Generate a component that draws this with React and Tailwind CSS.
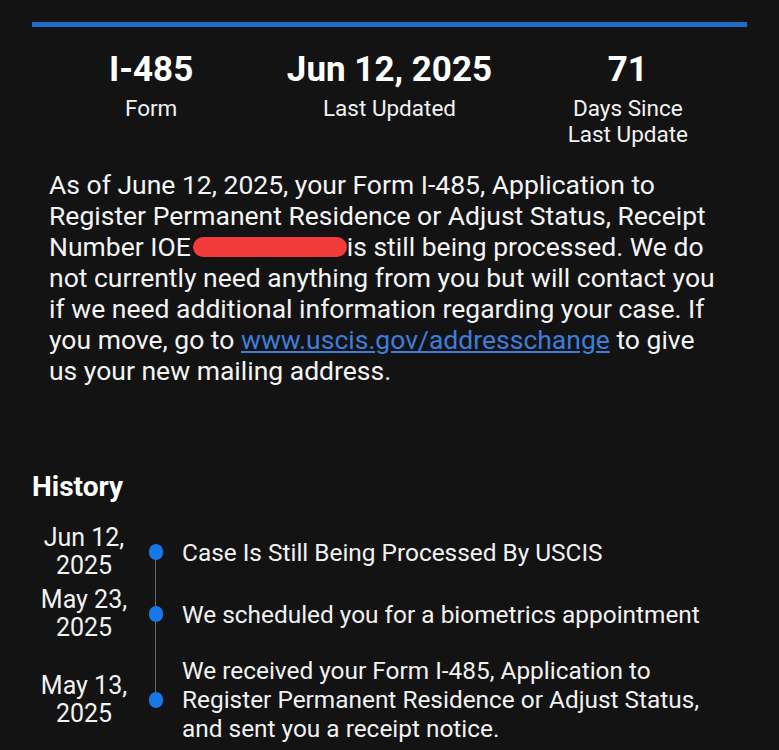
import React from "react";

const history = [
  { date: ["Jun 12,", "2025"], text: "Case Is Still Being Processed By USCIS", gap: "mb-[6px]" },
  { date: ["May 23,", "2025"], text: "We scheduled you for a biometrics appointment", gap: "mb-[14px]" },
  {
    date: ["May 13,", "2025"],
    text: "We received your Form I-485, Application to Register Permanent Residence or Adjust Status, and sent you a receipt notice.",
    gap: "",
  },
];

export default function App() {
  return (
    <div
      className="min-h-screen w-[779px] h-[750px] overflow-hidden bg-[#131313] text-white"
      style={{ fontFamily: "Roboto, 'Noto Sans', sans-serif" }}
    >
      <div className="px-8 pt-[22px]">
        <div className="h-[5px] bg-[#1f6cca]" />

        {/* stats */}
        <div className="grid grid-cols-3 mt-[23px] text-center">
          <div>
            <div className="text-[35px] font-bold leading-[40px]">I-485</div>
            <div className="text-[22.5px] leading-[26px] mt-[5px] text-[#f2f2f2]">Form</div>
          </div>
          <div>
            <div className="text-[35px] font-bold leading-[40px]">Jun 12, 2025</div>
            <div className="text-[22.5px] leading-[26px] mt-[5px] text-[#f2f2f2]">Last Updated</div>
          </div>
          <div>
            <div className="text-[35px] font-bold leading-[40px]">71</div>
            <div className="text-[22.5px] leading-[26px] mt-[5px] text-[#f2f2f2]">
              Days Since
              <br />
              Last Update
            </div>
          </div>
        </div>

        {/* status text */}
        <p className="mt-[22px] pl-[17px] pr-[24px] text-[26.5px] leading-[31px] text-[#f5f5f5]">
          As of June 12, 2025, your Form I-485, Application to Register Permanent Residence or Adjust Status, Receipt
          Number IOE
          <span className="inline-block align-middle w-[154px] h-[20px] -mt-[4px] ml-[2px] bg-[#f23b3b] rounded-[10px]" />
          is still being processed. We do not currently need anything from you but will contact you if we need
          additional information regarding your case. If you move, go to{" "}
          <a className="text-[#3d7ddb] underline">www.uscis.gov/addresschange</a> to give us your new mailing address.
        </p>

        {/* history */}
        <h2 className="mt-[84px] text-[28px] font-bold leading-[34px]">History</h2>

        <div className="mt-[20px] relative">
          <div className="absolute left-[123px] top-[28px] bottom-[40px] w-[1px] bg-[#6b6b6b]" />
          {history.map((h, i) => (
            <div key={i} className={`flex items-center ${h.gap}`}>
              <div className="w-[104px] text-center text-[25px] leading-[28px] text-[#f2f2f2]">
                {h.date[0]}
                <br />
                {h.date[1]}
              </div>
              <div className="w-[40px] flex justify-center relative z-10">
                <div className="w-[14px] h-[16px] rounded-full bg-[#1677e8]" />
              </div>
              <div className="flex-1 text-[24.4px] leading-[29px] text-[#f2f2f2] pl-[6px] pr-[30px]">{h.text}</div>
            </div>
          ))}
        </div>
      </div>
    </div>
  );
}
